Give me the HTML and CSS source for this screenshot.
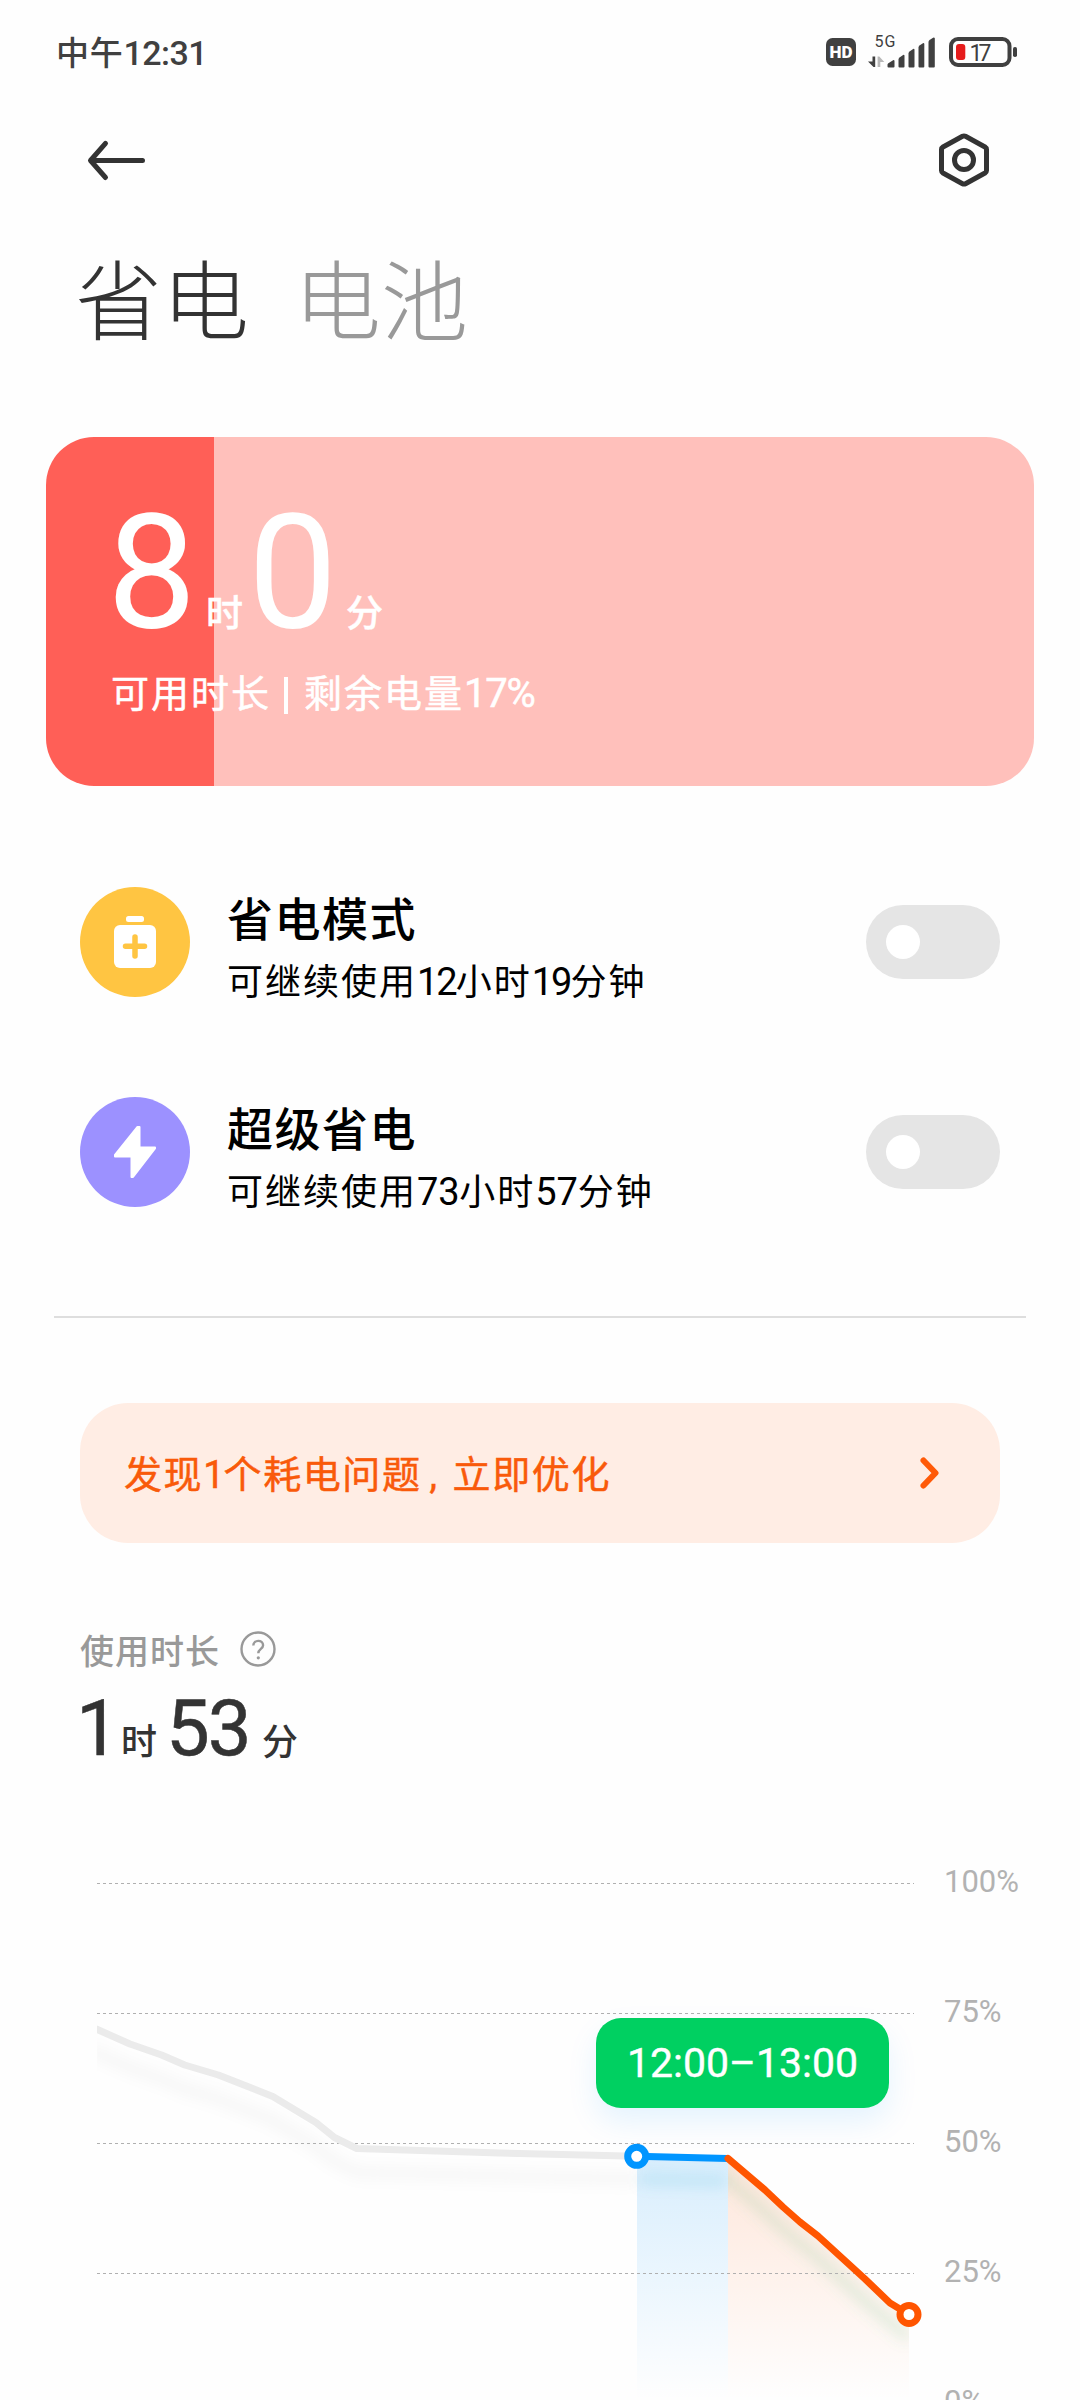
FILE: index.html
```html
<!DOCTYPE html>
<html lang="zh-CN">
<head>
<meta charset="utf-8">
<title>省电与电池</title>
<link rel="stylesheet" href="styles.css">
</head>
<body>
<div class="screen">
  <div class="status-bar">
    <div class="clock"><span class="clock-period">中午</span>12:31</div>
    <svg class="status-icons" viewBox="826 32 192 40" width="192" height="40">
      <rect x="826" y="38" width="30" height="28" rx="6.5" fill="#404040"/>
      <text class="hd" x="829.5" y="58" textLength="23" lengthAdjust="spacingAndGlyphs">HD</text>
      <text class="net" x="874.5" y="47" textLength="21">5G</text>
      <path d="M872.500 56.500h2.700v10.500h-1.700l-5.500-5.500h4.500z" fill="#404040"/>
      <path d="M880.300 67h-2.700v-10.500h1.700l5 5.500h-4z" fill="#b9b9b9"/>
      <g fill="#404040">
        <path d="M889.500 62.500l4-2.500q1 0 1 1v5.500q0 1-1 1h-5q-1 0-1-1v-2q0-1.200 2-2z"/>
        <path d="M899.500 57.500l4-2.700q1 0 1 1v10.700q0 1-1 1h-4q-1 0-1-1v-7q0-1.200 1-2z"/>
        <path d="M909.500 51.500l4-2.700q1 0 1 1v16.700q0 1-1 1h-4q-1 0-1-1v-13q0-1.200 1-2z"/>
        <path d="M919.500 45.500l3.800-2.500q1 0 1 1v22.500q0 1-1 1h-3.800q-1 0-1-1v-19q0-1.200 1-2z"/>
        <path d="M929.500 40l4-2.500q1.300 0 1.300 1v28q0 1-1 1h-4.300q-1 0-1-1v-24.500q0-1.200 1-2z"/>
      </g>
      <rect x="951" y="39" width="58.500" height="26" rx="7" fill="none" stroke="#404040" stroke-width="4"/>
      <rect x="956" y="44" width="9.300" height="16" rx="3" fill="#e61c1c"/>
      <rect x="1013" y="47" width="4" height="10" rx="1.800" fill="#404040"/>
      <text class="level" x="969.500" y="61" textLength="22">17</text>
    </svg>
  </div>

  <div class="toolbar">
    <svg class="icon" viewBox="0 0 60 60" width="60" height="60">
      <path d="M56.500 30.500H5M19.500 13.300L4.500 30.500l15 17"/>
    </svg>
    <svg class="icon" viewBox="0 0 60 60" width="60" height="60">
      <path d="M28.500 6.300q1.500-.8 3 0l19.500 10.700q1.500.9 1.500 2.600v20.800q0 1.700-1.500 2.600l-19.500 10.700q-1.500.8-3 0l-19.500-10.700q-1.500-.9-1.500-2.600v-20.800q0-1.700 1.500-2.600z"/>
      <circle cx="30" cy="30" r="9.500"/>
    </svg>
  </div>

  <div class="tabs">
    <div class="tab tab-active">省电</div>
    <div class="tab">电池</div>
  </div>

  <div class="battery-card">
    <div class="remaining"><b class="hours">8</b><i class="unit-hour">时</i><b class="minutes">0</b><i>分</i></div>
    <div class="remaining-note"><span>可用时长</span><span class="bar"></span><span>剩余电量<em>17%</em></span></div>
  </div>

  <div class="modes">
    <div class="mode">
      <svg class="mode-icon" viewBox="0 0 110 110" width="110" height="110">
        <circle cx="55" cy="55" r="55" fill="#ffc542"/>
        <rect x="46" y="29" width="18" height="6" rx="2.500" fill="#fff"/>
        <rect x="34" y="38" width="42" height="43" rx="6" fill="#fff"/>
        <path d="M45.500 59.300h19M55 50v19" stroke="#ffc542" stroke-width="5.500" stroke-linecap="round"/>
      </svg>
      <div class="mode-text">
        <div class="mode-title">省电模式</div>
        <div class="mode-sub">可继续使用<em class="tight">12</em>小时<em class="tight">19</em>分钟</div>
      </div>
      <div class="switch"><div class="knob"></div></div>
    </div>
    <div class="mode">
      <svg class="mode-icon" viewBox="0 0 110 110" width="110" height="110">
        <circle cx="55" cy="55" r="55" fill="#9c91ff"/>
        <path d="M57.500 30L35 58v1.500h16.500v20.500h1.500L75 51.500v-1h-15.500v-20.500z" fill="#fff" stroke="#fff" stroke-width="2" stroke-linejoin="round"/>
      </svg>
      <div class="mode-text">
        <div class="mode-title">超级省电</div>
        <div class="mode-sub">可继续使用<em>73</em>小时<em>57</em>分钟</div>
      </div>
      <div class="switch"><div class="knob"></div></div>
    </div>
  </div>

  <div class="divider"></div>

  <div class="notice">
    <div class="notice-text">发现<em>1</em>个耗电问题<span class="comma">,</span>立即优化</div>
    <svg viewBox="0 0 24 36" width="24" height="36"><path d="M5.500 5.500L17.500 18 5.500 30.500"/></svg>
  </div>

  <div class="usage">
    <div class="usage-label">使用时长
      <svg viewBox="0 0 36 36" width="36" height="36">
        <circle cx="18" cy="18" r="16.500"/>
        <path d="M13.300 14.600c0-6.300 9.800-6.300 9.800-.3 0 3.700-4.800 3.600-4.800 8"/>
        <circle class="dot" cx="18.300" cy="26.800" r="1.600"/>
      </svg>
    </div>
    <div class="usage-time"><b class="uh">1</b><i class="uhu">时</i><b class="um">53</b><i>分</i></div>
  </div>

  <div class="chart">
    <svg class="plot" viewBox="97 1870 830 530" width="830" height="530">
      <defs>
        <linearGradient id="blue" x1="0" y1="2158" x2="0" y2="2400" gradientUnits="userSpaceOnUse">
          <stop offset="0" stop-color="#0090f5" stop-opacity=".15"/><stop offset="1" stop-color="#0095ff" stop-opacity="0"/>
        </linearGradient>
        <linearGradient id="orange" x1="0" y1="2158" x2="0" y2="2400" gradientUnits="userSpaceOnUse">
          <stop offset="0" stop-color="#ff5500" stop-opacity=".14"/><stop offset="1" stop-color="#ff5500" stop-opacity="0"/>
        </linearGradient>
        <filter id="soft" x="0" y="1800" width="1100" height="700" filterUnits="userSpaceOnUse"><feGaussianBlur stdDeviation="7"/></filter>
        <clipPath id="span"><rect x="97" y="1870" width="812" height="530"/></clipPath>
        <clipPath id="drop"><path d="M728 2158L765 2190 783 2207 800 2222 818 2236 865 2279 890 2303 909 2314V2400H728z"/></clipPath>
      </defs>
      <path d="M637 2156.500L728 2158.500V2400H637z" fill="url(#blue)"/>
      <path d="M728 2158L765 2190 783 2207 800 2222 818 2236 865 2279 890 2303 909 2314V2400H728z" fill="url(#orange)"/>
      <g clip-path="url(#span)">
        <path class="shade" d="M90 2050L130 2068 161.600 2079 184.700 2089 218.400 2099 272.800 2120.500 315.900 2146.500 334.500 2161.500 356.800 2172.500 637 2179"/>
        <path class="shade shade-blue" d="M640 2179L726 2181"/>
        <g clip-path="url(#drop)">
          <path class="shade shade-green" d="M720 2172L765 2212 783 2229 818 2258 865 2301 909 2338"/>
        </g>
      </g>
      <path class="grid" d="M97 1883.500H914M97 2013.500H914M97 2143.500H914M97 2273.500H914"/>
      <path class="line" stroke="#ebebeb" d="M94 2027.800L97 2029.300 130 2044 161.600 2055 184.700 2065 218.400 2075 272.800 2096.500 315.900 2122.500 334.500 2137.500 356.800 2148.500 500 2153 637 2156.300"/>
      <path class="line" stroke="#0095ff" d="M637 2156.300L728 2158.500"/>
      <path class="line round" stroke="#ff5500" d="M728 2158.500L765 2190 783 2207 800 2222 818 2236 865 2279 890 2303 909 2314.500"/>
      <circle cx="636.700" cy="2156.300" r="9" fill="#fff" stroke="#0095ff" stroke-width="7"/>
      <circle cx="909" cy="2314.500" r="9" fill="#fff" stroke="#ff5500" stroke-width="7"/>
    </svg>
    <div class="axis">
      <span>100%</span><span>75%</span><span>50%</span><span>25%</span><span>0%</span>
    </div>
    <div class="tooltip">12:00–13:00</div>
  </div>
</div>
</body>
</html>
```
FILE: styles.css
```css
* { box-sizing: border-box; }
body {
  margin: 0;
  background: #fefefe;
  color: #333;
  font-family: Roboto, "Noto Sans CJK SC", sans-serif;
}
b, i, em { font-style: normal; font-weight: inherit; }

.screen {
  width: 1080px;
  height: 2400px;
  overflow: hidden;
  display: flex;
  flex-direction: column;
}

/* status bar */
.status-bar {
  height: 104px;
  padding: 0 62px 0 56px;
  display: flex;
  align-items: center;
  justify-content: space-between;
  color: #404040;
}
.clock { font-size: 34px; font-weight: 500; line-height: 40px; padding-top: 2px; letter-spacing: -.6px; }
.clock-period { font-size: 33px; letter-spacing: .8px; }
.hd { font: 900 17px Roboto, sans-serif; fill: #fff; }
.net { font: 400 16px Roboto, sans-serif; fill: #404040; }
.level { font: 400 23px Roboto, sans-serif; fill: #404040; }

/* toolbar */
.toolbar {
  height: 112px;
  padding: 0 86px;
  display: flex;
  align-items: center;
  justify-content: space-between;
}
.icon { fill: none; stroke: #333; stroke-width: 5; stroke-linecap: round; stroke-linejoin: round; }

/* tabs */
.tabs { height: 221px; padding: 35px 75px 0; display: flex; gap: 45px; }
.tab {
  font-size: 87px;
  font-weight: 300;
  line-height: 106px;
  color: #999;
}
.tab-active { color: #333; }

/* battery card */
.battery-card {
  height: 349px;
  margin: 0 46px;
  padding: 66px 61px 0;
  border-radius: 48px;
  color: #fff;
  background: linear-gradient(90deg, #ff5f57 17%, #ffc0bb 17%);
}
.remaining { display: flex; align-items: baseline; height: 161px; line-height: 140px; }
.remaining b { font-size: 159px; font-weight: 400; }
.hours { width: 99px; }
.remaining .minutes { width: 98px; }
.remaining i { font-size: 37px; font-weight: 500; -webkit-text-stroke: .4px; }
.unit-hour { width: 42px; }
.remaining-note { display: flex; padding-left: 4px; font-size: 38px; line-height: 60px; letter-spacing: 2px; -webkit-text-stroke: .5px; }
.remaining-note em { font-size: 40px; letter-spacing: -1.300px; }
.bar { width: 4px; height: 37px; margin: 13px 16px 0 13px; background: #fff; }

/* saver modes */
.modes { padding: 101px 80px 0; height: 530px; display: flex; flex-direction: column; gap: 100px; }
.mode { display: flex; height: 110px; align-items: center; }
.mode-text { flex: 1; padding: 14px 0 0 37px; color: #000; }
.mode-title { font-size: 46px; font-weight: 500; line-height: 66px; letter-spacing: 1.500px; }
.mode-sub { font-size: 36px; line-height: 58px; letter-spacing: 2px; }
.mode-sub em { font-size: 38px; letter-spacing: -.2px; }
.mode-sub .tight { letter-spacing: -2px; }
.switch { width: 134px; height: 74px; padding: 20px; border-radius: 37px; background: #e5e5e5; }
.knob { width: 34px; height: 34px; border-radius: 50%; background: #fff; }
.divider { height: 2px; margin: 0 54px; background: #dedede; }

/* notice */
.notice {
  height: 140px;
  margin: 85px 80px 0;
  padding: 0 58px 0 44px;
  border-radius: 48px;
  display: flex;
  align-items: center;
  justify-content: space-between;
  background: #ffede4;
  color: #f95a0a;
  font-size: 38px;
  letter-spacing: 1.600px;
}
.notice-text { padding-bottom: 3px; -webkit-text-stroke: .5px; }
.notice-text em { letter-spacing: -1px; }
.comma { display: inline-block; width: 31px; padding-left: 8px; }
.notice svg { fill: none; stroke: #ff5a08; stroke-width: 6; stroke-linecap: round; stroke-linejoin: round; }

/* usage */
.usage { padding: 76px 80px 0; height: 327px; }
.usage-label { display: flex; align-items: center; gap: 20px; height: 60px; color: #999; font-size: 34px; font-weight: 500; letter-spacing: 1px; }
.usage-label svg { fill: none; stroke: #999; stroke-width: 2.400; }
.usage-label .dot { fill: #999; stroke: none; }
.usage-time { display: flex; align-items: baseline; padding-top: 5px; line-height: 90px; }
.usage-time b { font-size: 78px; font-weight: 400; letter-spacing: -2px; -webkit-text-stroke: .5px; }
.usage-time i { font-size: 36px; font-weight: 500; }
.usage-time .uh { width: 45px; margin-left: -4px; }
.uhu { width: 45px; }
.um { width: 96px; }

/* chart */
.chart { position: relative; height: 530px; padding-left: 97px; display: flex; }
.plot { flex: none; }
.grid { stroke: #b0b0b0; stroke-width: 1; stroke-dasharray: 3 3; fill: none; }
.line { fill: none; stroke-width: 7; stroke-linejoin: round; }
.round { stroke-linecap: round; }
.shade { fill: none; stroke: #000; stroke-opacity: .03; stroke-width: 12; filter: url(#soft); }
.shade-blue { stroke: #00a0c8; stroke-opacity: .12; }
.shade-green { stroke: #5ab478; stroke-opacity: .16; }
.axis { padding: 0 0 0 17px; margin-top: -53px; display: flex; flex-direction: column; color: #b2b2b2; font-size: 31px; line-height: 130px; }
.tooltip {
  position: absolute;
  left: 596px;
  top: 148px;
  width: 293px;
  height: 90px;
  border-radius: 25px;
  background: #00d061;
  color: #fff;
  font-size: 41px;
  line-height: 90px;
  text-align: center;
  -webkit-text-stroke: .4px;
  box-shadow: 0 14px 30px rgba(0, 149, 255, .1);
}
```
